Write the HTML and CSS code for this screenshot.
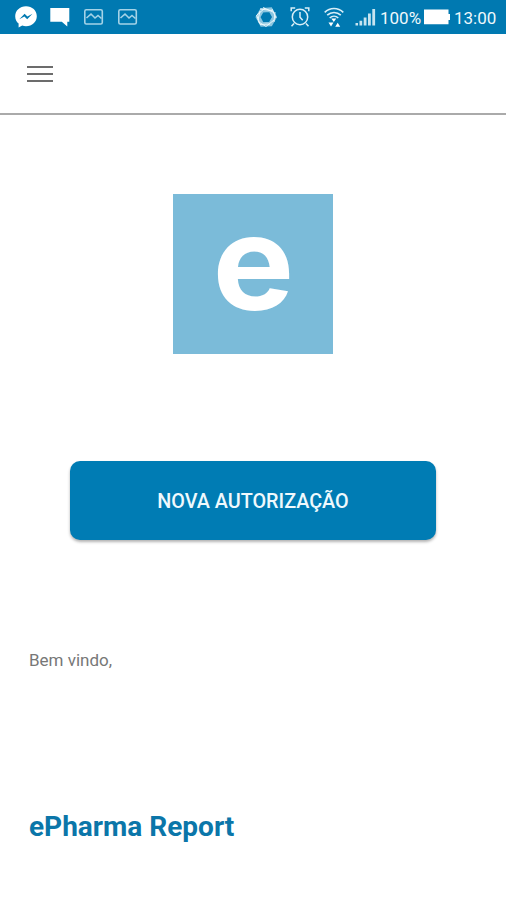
FILE: index.html
```html
<!DOCTYPE html>
<html lang="pt-BR">
<head>
    <meta charset="UTF-8">
    <meta name="viewport" content="width=device-width, initial-scale=1.0">
    <title>ePharma Report</title>
    <link rel="stylesheet" href="styles.css">
</head>
<body>
    <div class="status-bar">
        <div class="notifications">
            <svg class="messenger" width="22" height="22" viewBox="0 0 22 22">
                <path fill="#fff" d="M11 .3C4.8.3.2 4.7.2 10.2c0 3 1.3 5.6 3.400 7.400v4l3.600-2c1.200.4 2.500.6 3.800.6 6.200 0 10.800-4.400 10.800-10S17.200.3 11 .3z"/>
                <path fill="#0079b1" d="M4.300 13.200l5.300-5.400 2.800 2.600 5.100-2.600-5.300 5.400-2.800-2.700z"/>
            </svg>
            <svg width="20" height="20" viewBox="0 0 20 20">
                <path fill="#fff" d="M.3 1h19v13.700h-2v4.700l-5.500-4.700H.3z"/>
            </svg>
            <svg class="picture" width="20" height="16" viewBox="0 0 20 16">
                <rect x=".8" y=".8" width="17.500" height="14.200" rx="1.500"/>
                <path d="M2.500 9l4.500-4 4 4 3-2.500 3.500 3"/>
            </svg>
            <svg class="picture" width="20" height="16" viewBox="0 0 20 16">
                <rect x=".8" y=".8" width="17.500" height="14.200" rx="1.500"/>
                <path d="M2.500 9l4.500-4 4 4 3-2.500 3.500 3"/>
            </svg>
        </div>
        <div class="system">
            <svg class="ring" width="23" height="22" viewBox="0 0 23 22">
                <path stroke="#8cc6e0" stroke-width="4.500" d="M7 4.200l8.500-.5 4 7.300-4 7-8.500.5L3 11z"/>
                <path stroke="#f2fafd" stroke-width=".9" d="M5 3l12 1.500M8 1.500l11 5M17 3l4 9M20 6l-1 10M19 14l-8 6.500M15 18l-10 .5M11 20.500l-8-5M5 18L1.500 9M3 14L5 5M2 9l8-7"/>
            </svg>
            <svg class="alarm" width="20" height="22" viewBox="0 0 20 22">
                <circle cx="10" cy="11" r="7.700"/>
                <path d="M10 6v5.300l2.700 3M1.200 5.200V2h4M18.800 5.200V2h-4M4 17.500l-2.500 2.800M16 17.500l2.500 2.800"/>
            </svg>
            <svg class="wifi" width="20" height="22" viewBox="0 0 20 22">
                <path fill="none" stroke="#d9eef7" stroke-width="1.600" d="M.7 6.300c5.300-5.100 13.300-5.100 18.600 0M3.200 9.200c3.900-3.700 9.700-3.700 13.600 0M5.700 12c2.500-2.300 6.100-2.300 8.600 0"/>
                <path fill="#fff" d="M7.300 12.500h5L9.800 16zM4.500 16.500h5L7 20.500zM11.200 20.800h5l-2.500-4z"/>
            </svg>
            <svg class="signal" width="21" height="18" viewBox="0 0 21 18">
                <path fill="#c7e4f0" d="M.5 15H3v2.500H.5zM4.500 12.700H7.200v4.800H4.500zM8.700 9.500h2.800v8H8.700zM13 5.500h2.800v12H13zM17.300 1h2.800v16.500h-2.800z"/>
            </svg>
            <span class="percent">100%</span>
            <svg class="battery" width="27" height="16" viewBox="0 0 27 16">
                <path fill="#fff" d="M0 .5h24.500V5H26v6h-1.500v4.300H0z"/>
            </svg>
            <span class="clock">13:00</span>
        </div>
    </div>
    <header>
        <svg class="menu" width="26" height="18" viewBox="0 0 26 18">
            <path d="M0 2h26M0 9h26M0 16h26"/>
        </svg>
    </header>
    <main>
        <div class="logo"><span class="logo-letter">e</span></div>
        <button class="new-auth">NOVA AUTORIZAÇÃO</button>
        <p class="welcome">Bem vindo,</p>
        <h1>ePharma Report</h1>
    </main>
</body>
</html>
```
FILE: styles.css
```css
body {
    font-family: Roboto, "Liberation Sans", sans-serif;
    margin: 0;
    background-color: #fff;
}

svg {
    display: block;
    flex: none;
}

.status-bar {
    display: flex;
    justify-content: space-between;
    align-items: center;
    box-sizing: border-box;
    height: 34px;
    padding: 0 11px 0 15px;
    background-color: #0079b1;
    color: #eef8fc;
    font-size: 17px;
    line-height: 34px;
}

.notifications,
.system {
    display: flex;
    align-items: center;
}

.notifications {
    gap: 14px;
}

.messenger {
    margin-right: -1px;
}

.picture {
    fill: none;
    stroke: #a5d3e7;
    stroke-width: 1.6;
}

.ring {
    fill: none;
    margin-right: 12px;
}

.alarm {
    fill: none;
    stroke: #d9eef7;
    stroke-width: 1.5;
    margin-right: 14px;
}

.wifi {
    margin-right: 11px;
}

.signal {
    margin-right: 4px;
}

.percent,
.clock {
    padding-top: 2px;
    line-height: 32px;
    white-space: nowrap;
}

.percent {
    width: 44px;
}

.clock {
    margin-left: 3px;
    width: 41px;
}

header {
    display: flex;
    align-items: center;
    box-sizing: border-box;
    height: 81px;
    padding-left: 27px;
    border-bottom: 2px solid #aaa;
}

.menu {
    stroke: #6c6c6c;
    stroke-width: 2;
}

main {
    display: flex;
    flex-direction: column;
    padding: 79px 29px 0;
}

.logo {
    display: flex;
    justify-content: center;
    align-self: center;
    width: 160px;
    height: 160px;
    background-color: #7bbbd9;
}

.logo-letter {
    font: bold 132px/136px Inter, "Liberation Sans", sans-serif;
    color: #fff;
    transform: scaleX(1.04);
}

.new-auth {
    align-self: center;
    width: 366px;
    height: 79px;
    margin: 107px 0 0;
    padding: 2px 0 0;
    border: none;
    border-radius: 10px;
    background-color: #007cb4;
    box-shadow: 0 2px 3px rgba(0, 0, 0, 0.3);
    color: #eff9fd;
    font: 500 19.8px/77px Roboto, sans-serif;
}

.welcome {
    margin: 108px 0 0;
    color: #777;
    font-size: 17px;
    line-height: 24px;
}

h1 {
    margin: 138px 0 0;
    color: #0b76a9;
    font-size: 28px;
    font-weight: 700;
    line-height: 34px;
}
```
